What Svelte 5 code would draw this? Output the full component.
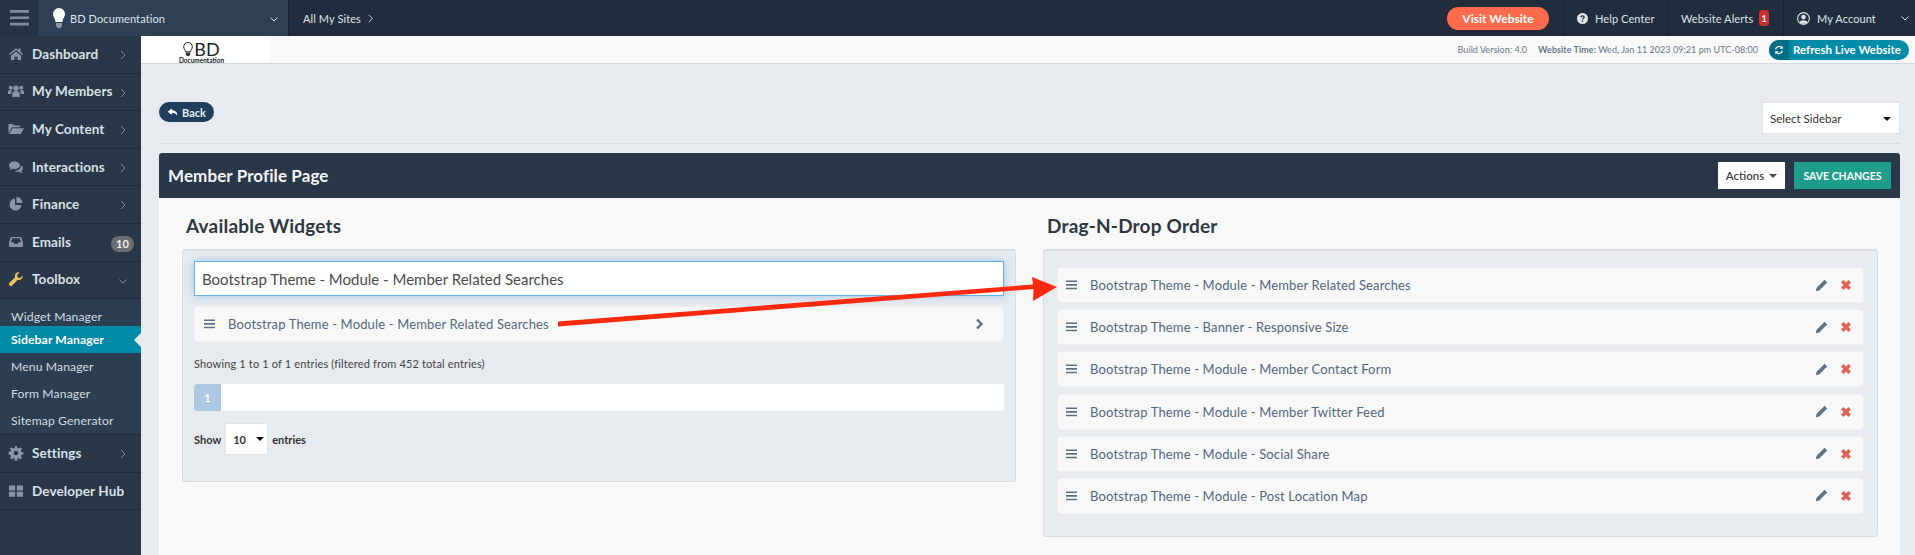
<script>
  const paths = {
    home: 'M8 2.200 1 8l.8 1L8 4l6.200 5 .8-1-2.500-2.100V2.500h-2v1.800Z M3 9.800 8 5.600l5 4.200V14H9.500v-3.500h-3V14H3Z',
    users: 'M8 2.500a2.700 2.700 0 1 1 0 5.400 2.700 2.700 0 0 1 0-5.400Z M4.300 14v-3.300C4.300 9.200 5.300 8.300 6.500 8.300h3c1.200 0 2.200.9 2.200 2.400V14Z M2.800 2.800a2 2 0 1 1 0 4 2 2 0 0 1 0-4Z M13.200 2.800a2 2 0 1 1 0 4 2 2 0 0 1 0-4Z M0 11V8.800c0-1 .7-1.500 1.500-1.500h2.600c-.6.800-.8 2-.8 3.700Z M16 11V8.800c0-1-.7-1.500-1.500-1.500h-2.600c.6.800.8 2 .8 3.700Z',
    folder: 'M.5 12.500V3h4.300l1 1.500h6.400v1.700H4Z M4.500 7.200H16L13 13H1.200Z',
    comments: 'M6.500 2.500c3 0 5.500 1.700 5.500 3.800S9.500 10 6.500 10c-.7 0-1.300 0-1.900-.2-1 .8-2.100 1.200-3.100 1.200.6-.7 1-1.400 1.100-2.100C1.600 8.200 1 7.300 1 6.300c0-2.100 2.500-3.800 5.500-3.800Z M13 6.500c1.300.7 2 1.700 2 2.800 0 1-.6 1.900-1.600 2.600.1.700.5 1.400 1.100 2.100-1 0-2.100-.4-3.100-1.200-1.800.4-4 0-5-1 3.600 0 6.800-1.800 6.600-5.300Z',
    pie: 'M7 2.500A6 6 0 1 0 13.500 9H7Z M8.500 1a6 6 0 0 1 6 6h-6Z',
    inbox: 'M3.500 3h9a1 1 0 0 1 1 .7L15 8.500V12a1 1 0 0 1-1 1H2a1 1 0 0 1-1-1V8.500l1.500-4.800a1 1 0 0 1 1-.7Z M4.300 4.300 2.900 8.300h2.600l1 1.700h3l1-1.700h2.600l-1.400-4Z',
    wrench: 'M14.500 4.500 12 7l-2.500-.7L9 4l2.500-2.500C9.500 1 7.500 2 7 4c-.2.800-.1 1.500.1 2.200l-5.600 5.600a1.800 1.800 0 0 0 2.600 2.600l5.600-5.500c2.500.7 5.500-1.500 4.800-4.400Z',
    cog: 'M6.800 1h2.400l.3 2 1.300.5 1.600-1.200 1.700 1.700-1.200 1.600.5 1.300 2 .3v2.400l-2 .3-.5 1.300 1.200 1.600-1.700 1.700-1.600-1.200-1.300.5-.3 2H6.800l-.3-2-1.300-.5-1.600 1.200-1.700-1.700 1.200-1.600-.5-1.300-2-.3V6.800l2-.3.5-1.300-1.200-1.600L3.600 2.300l1.600 1.200 1.300-.5Z M8 5.700a2.300 2.300 0 1 0 0 4.600 2.300 2.300 0 0 0 0-4.600Z',
    grid: 'M1 2.500h6.200v5H1Z M8.800 2.500H15v5H8.800Z M1 8.800h6.200v5H1Z M8.800 8.800H15v5H8.800Z',
    reply: 'M6.500 3 1 7.500 6.500 12V9.200c3.500 0 5.800.6 7 3.800.5-4.500-2-7.200-7-7.300Z',
    pencil: 'M11.800 1 15 4.200 5.200 14 1 15l1-4.200Z'
  }

  const menu_top = [
    { label: 'Dashboard', icon: 'home' },
    { label: 'My Members', icon: 'users' },
    { label: 'My Content', icon: 'folder' },
    { label: 'Interactions', icon: 'comments' },
    { label: 'Finance', icon: 'pie' },
    { label: 'Emails', icon: 'inbox', badge: '10' }
  ]
  const sub_menu = ['Widget Manager', 'Sidebar Manager', 'Menu Manager', 'Form Manager', 'Sitemap Generator']
  const order_items = [
    'Bootstrap Theme - Module - Member Related Searches',
    'Bootstrap Theme - Banner - Responsive Size',
    'Bootstrap Theme - Module - Member Contact Form',
    'Bootstrap Theme - Module - Member Twitter Feed',
    'Bootstrap Theme - Module - Social Share',
    'Bootstrap Theme - Module - Post Location Map'
  ]
</script>

{#snippet icon(name, cls)}
  <svg class={cls} viewBox="0 0 16 16" aria-hidden="true"><path fill-rule="evenodd" d={paths[name]} /></svg>
{/snippet}

{#snippet bars(cls)}
  <svg class={cls} viewBox="0 0 12 10" aria-hidden="true"><path d="M0 0h12v1.700H0Z M0 4h12v1.700H0Z M0 8h12v1.700H0Z" /></svg>
{/snippet}

{#snippet chev(cls, dir = 'M3 1l4 4-4 4')}
  <svg class={cls} viewBox="0 0 10 10" aria-hidden="true"><path d={dir} fill="none" stroke="currentColor" /></svg>
{/snippet}

<div class="page">
  <header class="topbar">
    <button class="burger" aria-label="Menu">{@render bars('burger-icon')}</button>
    <div class="brand">
      <svg class="bulb" viewBox="0 0 12 20" aria-hidden="true">
        <path d="M6 0a6 6 0 0 1 6 6c0 3-2.200 4-2.500 8h-7C2.200 10 0 9 0 6a6 6 0 0 1 6-6Z" fill="#fff" />
        <path d="M3 15h6v2.500L7.500 20h-3L3 17.500Z" fill="#8d969f" />
      </svg>
      <span class="brand-name">BD Documentation</span>
      {@render chev('brand-chev', 'M1.500 3.500 5 7l3.500-3.500')}
    </div>
    <div class="sites">All My Sites {@render chev('sites-chev')}</div>
    <div class="top-right">
      <button class="visit">Visit Website</button>
      <div class="top-link help">
        <svg class="top-icon" viewBox="0 0 16 16" aria-hidden="true">
          <circle cx="8" cy="8" r="8" fill="#dfe5ea" />
          <path d="M5.600 6.200C5.800 4.800 6.800 4.200 8 4.200c1.400 0 2.400.8 2.400 2 0 1.700-2.400 1.600-2.400 3.300" fill="none" stroke="#212d3d" stroke-width="1.800" />
          <rect x="7" y="10.800" width="2" height="2" fill="#212d3d" />
        </svg>
        Help Center
      </div>
      <div class="top-link alerts">Website Alerts <span class="alert-badge">1</span></div>
      <div class="top-link account">
        <svg class="top-icon account-icon" viewBox="0 0 16 16" aria-hidden="true">
          <circle cx="8" cy="8" r="7.200" fill="none" stroke="#dfe5ea" stroke-width="1.400" />
          <circle cx="8" cy="6.300" r="2.800" fill="#dfe5ea" />
          <path d="M3 13c.6-2.200 2.500-3 5-3s4.400.8 5 3c-2.500 2-7.500 2-10 0Z" fill="#dfe5ea" />
        </svg>
        My Account
        {@render chev('account-chev', 'M1.500 3.500 5 7l3.500-3.500')}
      </div>
    </div>
  </header>

  <div class="layout">
    <nav class="sidebar">
      {#each menu_top as item}
        <div class="nav-item">
          {@render icon(item.icon, 'nav-icon')}
          <span class="nav-label">{item.label}</span>
          {#if item.badge}
            <span class="nav-badge">{item.badge}</span>
          {:else}
            {@render chev('nav-chev')}
          {/if}
        </div>
      {/each}
      <div class="nav-item open">
        {@render icon('wrench', 'nav-icon wrench')}
        <span class="nav-label">Toolbox</span>
        {@render chev('nav-chev', 'M1.500 3.500 5 7l3.500-3.500')}
      </div>
      <div class="sub-menu">
        {#each sub_menu as sub}
          <div class="sub-item" class:active={sub === 'Sidebar Manager'}>{sub}</div>
        {/each}
      </div>
      <div class="nav-item">
        {@render icon('cog', 'nav-icon')}
        <span class="nav-label">Settings</span>
        {@render chev('nav-chev')}
      </div>
      <div class="nav-item">
        {@render icon('grid', 'nav-icon')}
        <span class="nav-label">Developer Hub</span>
      </div>
    </nav>

    <main class="main">
      <div class="strip">
        <div class="logo">
          <div class="logo-top">
            <svg class="logo-bulb" viewBox="0 0 10 14" aria-hidden="true">
              <path d="M5 .5a4.300 4.300 0 0 1 4.300 4.300c0 2.200-1.600 2.900-1.800 5H2.500C2.300 7.700.7 7 .7 4.800A4.300 4.300 0 0 1 5 .5Z" fill="none" stroke="#222" />
              <path d="M2.800 10.500h4.400v2L6 14H4l-1.200-1.500Z" fill="#333" />
            </svg>
            <span class="logo-bd">BD</span>
          </div>
          <span class="logo-doc">Documentation</span>
        </div>
        <div class="strip-right">
          <span class="build">Build Version: 4.0</span>
          <span class="time"><b>Website Time:</b> Wed, Jan 11 2023 09:21 pm UTC-08:00</span>
          <button class="refresh">
            <span class="refresh-icon">
              <svg viewBox="0 0 16 16" aria-hidden="true">
                <path d="M2.500 7A5.600 5.600 0 0 1 12.500 4.500M13.500 9A5.600 5.600 0 0 1 3.500 11.500" fill="none" stroke="#fff" stroke-width="2" />
                <path d="M14 1v5H9Z M2 15v-5h5Z" fill="#fff" />
              </svg>
            </span>
            <span class="refresh-label">Refresh Live Website</span>
          </button>
        </div>
      </div>

      <div class="content">
        <div class="toolbar">
          <button class="back">{@render icon('reply', 'back-icon')} Back</button>
          <div class="select-sidebar">Select Sidebar <i class="caret"></i></div>
        </div>

        <section class="panel">
          <div class="panel-head">
            <h1>Member Profile Page</h1>
            <div class="panel-actions">
              <button class="actions">Actions <i class="caret small"></i></button>
              <button class="save">SAVE CHANGES</button>
            </div>
          </div>
          <div class="panel-body">
            <div class="col col-left">
              <h2>Available Widgets</h2>
              <div class="well">
                <input class="search" value="Bootstrap Theme - Module - Member Related Searches" />
                <div class="row result">
                  {@render bars('row-bars')}
                  <span class="row-text">Bootstrap Theme - Module - Member Related Searches</span>
                  <svg class="row-next" viewBox="0 0 10 12" aria-hidden="true"><path d="M3 1.500 7.500 6 3 10.500" fill="none" stroke="currentColor" stroke-width="2.400" /></svg>
                </div>
                <p class="info">Showing 1 to 1 of 1 entries (filtered from 452 total entries)</p>
                <div class="pager"><span class="page-num">1</span></div>
                <div class="length">
                  <b>Show</b>
                  <span class="length-select">10 <i class="caret"></i></span>
                  <b>entries</b>
                </div>
              </div>
            </div>
            <div class="col col-right">
              <h2>Drag-N-Drop Order</h2>
              <div class="well order">
                {#each order_items as item}
                  <div class="row">
                    {@render bars('row-bars')}
                    <span class="row-text">{item}</span>
                    {@render icon('pencil', 'row-edit')}
                    <svg class="row-del" viewBox="0 0 16 16" aria-hidden="true"><path d="M3 3l10 10M13 3 3 13" fill="none" stroke="currentColor" stroke-width="4.500" /></svg>
                  </div>
                {/each}
              </div>
            </div>
          </div>
        </section>
      </div>
    </main>
  </div>

  <!-- annotation arrow drawn over the screenshot -->
  <svg class="arrow" viewBox="0 0 1915 555" aria-hidden="true">
    <path d="M558 321.500 1033 284.500 1032 277 1057 287 1033 301 1033.500 289 558 326.500Z" fill="#ff2a0d" />
  </svg>
</div>

<style>
  :global(body) {
    margin: 0;
    font-family: 'Lato', 'Open Sans', sans-serif;
  }

  button {
    font-family: inherit;
    border: 0;
    padding: 0;
  }

  .page {
    position: relative;
    width: 1915px;
    height: 555px;
    overflow: hidden;
    background: #e7eaef;
  }

  .arrow {
    position: absolute;
    left: 0;
    top: 0;
    width: 1915px;
    height: 555px;
    pointer-events: none;
  }

  .topbar {
    display: flex;
    height: 36px;
    background: #212d3d;
    color: #dfe5ea;
    font-size: 11px;
  }

  .burger {
    width: 38px;
    background: #253345;
    display: flex;
    align-items: center;
    justify-content: center;
  }

  .burger-icon {
    width: 19px;
    height: 16px;
    fill: #7f8b98;
  }

  .brand {
    width: 251px;
    background: #2d4055;
    display: flex;
    align-items: center;
    border-right: 1px solid #18222e;
    box-sizing: border-box;
    position: relative;
  }

  .bulb {
    width: 12px;
    height: 20px;
    margin-left: 15px;
  }

  .brand-name {
    margin-left: 5px;
    letter-spacing: 0.1px;
  }

  .brand-chev {
    width: 10px;
    height: 10px;
    margin-left: auto;
    margin-right: 9px;
    margin-top: 2px;
  }

  .sites {
    display: flex;
    align-items: center;
    gap: 5px;
    margin-left: 14px;
    letter-spacing: 0.1px;
  }

  .sites-chev {
    width: 9px;
    height: 9px;
  }

  .top-right {
    margin-left: auto;
    display: flex;
    align-items: center;
    height: 100%;
  }

  .visit {
    width: 102px;
    height: 23px;
    border-radius: 12px;
    background: #ff6b4d;
    color: #fff;
    font-size: 12px;
    font-weight: 700;
    margin-right: 14px;
  }

  .top-link {
    height: 100%;
    display: flex;
    align-items: center;
    border-left: 1px solid #18222e;
    box-sizing: border-box;
    letter-spacing: 0.1px;
    white-space: nowrap;
  }

  .help {
    width: 105px;
    padding-left: 13px;
    gap: 7px;
  }

  .alerts {
    width: 115px;
    padding-left: 12px;
    gap: 6px;
  }

  .account {
    width: 132px;
    padding-left: 13px;
    gap: 7px;
  }

  .top-icon {
    width: 11px;
    height: 11px;
  }

  .account-icon {
    width: 13px;
    height: 13px;
  }

  .alert-badge {
    width: 10px;
    height: 16px;
    border-radius: 3px;
    background: #c9302c;
    color: #fff;
    font-size: 9px;
    font-weight: 700;
    display: flex;
    align-items: center;
    justify-content: center;
  }

  .account-chev {
    width: 10px;
    height: 10px;
    margin-left: auto;
    margin-right: 5px;
  }

  .layout {
    display: grid;
    grid-template-columns: 141px 1fr;
    height: 519px;
  }

  .sidebar {
    background: #2a3748;
    color: #d9e0e7;
  }

  .nav-item {
    height: 37.600px;
    box-sizing: border-box;
    display: flex;
    align-items: center;
    border-bottom: 1px solid #212c3a;
    position: relative;
    padding-bottom: 1px;
  }

  .nav-icon {
    width: 16px;
    height: 16px;
    margin-left: 8px;
    fill: #8796a6;
    flex-shrink: 0;
  }

  .wrench {
    fill: #f0c25e;
  }

  .nav-label {
    margin-left: 8px;
    font-size: 13.500px;
    font-weight: 700;
    letter-spacing: 0.1px;
    white-space: nowrap;
  }

  .nav-chev {
    position: absolute;
    right: 13px;
    top: 14px;
    width: 10px;
    height: 10px;
    color: #7d8b9a;
  }

  .nav-badge {
    position: absolute;
    right: 7px;
    top: 12px;
    width: 23px;
    height: 16px;
    border-radius: 8px;
    background: #6b6f73;
    color: #eee;
    font-size: 11px;
    font-weight: 700;
    display: flex;
    align-items: center;
    justify-content: center;
  }

  .sub-menu {
    background: #2c3e51;
    border-bottom: 1px solid #212c3a;
  }

  .sub-item {
    height: 27px;
    box-sizing: border-box;
    display: flex;
    align-items: center;
    padding-left: 11px;
    font-size: 12.200px;
    letter-spacing: 0.1px;
    color: #d5dce3;
    position: relative;
  }

  .sub-item:first-child {
    padding-top: 8px;
  }

  .sub-item.active {
    background: #008ba9;
    color: #fff;
    font-weight: 700;
  }

  .sub-item.active::after {
    content: '';
    position: absolute;
    right: 0;
    top: 7px;
    border: 7px solid transparent;
    border-left-width: 0;
    border-right-color: #e7eaef;
  }

  .main {
    display: flex;
    flex-direction: column;
    min-width: 0;
  }

  .strip {
    height: 28px;
    box-sizing: border-box;
    background: #f9f9f9;
    border-bottom: 1px solid #d5d8dc;
    display: flex;
    align-items: center;
  }

  .logo {
    width: 130px;
    height: 100%;
    background: #fff;
    display: flex;
    flex-direction: column;
    align-items: center;
    color: #222;
    padding-right: 9px;
    box-sizing: border-box;
  }

  .logo-top {
    display: flex;
    align-items: center;
    height: 18px;
    margin-top: 4px;
  }

  .logo-bulb {
    width: 10px;
    height: 14px;
  }

  .logo-bd {
    font-size: 18px;
    line-height: 18px;
    margin-left: 1px;
  }

  .logo-doc {
    font-size: 6.500px;
    line-height: 5px;
    font-weight: 700;
  }

  .strip-right {
    margin-left: auto;
    display: flex;
    align-items: center;
    font-size: 9px;
    color: #68768a;
    letter-spacing: 0.04px;
  }

  .build {
    margin-right: 11px;
  }

  .refresh {
    display: flex;
    align-items: center;
    width: 140px;
    height: 20px;
    margin-left: 11px;
    margin-right: 6px;
    border-radius: 10px;
    background: #008ba9;
    color: #fff;
    font-size: 11.500px;
    font-weight: 700;
    overflow: hidden;
  }

  .refresh-label {
    white-space: nowrap;
  }

  .refresh-icon {
    width: 20px;
    height: 20px;
    background: #006d85;
    display: flex;
    align-items: center;
    justify-content: center;
    margin-right: 4px;
    flex-shrink: 0;
  }

  .refresh-icon svg {
    width: 10px;
    height: 10px;
  }

  .content {
    flex: 1;
    padding: 38px 15px 0 18px;
    min-height: 0;
  }

  .toolbar {
    display: flex;
    justify-content: space-between;
    align-items: flex-start;
    height: 41px;
    border-bottom: 1px solid #d8dbdf;
  }

  .back {
    width: 55px;
    height: 20px;
    border-radius: 10px;
    background: #1f3d5c;
    color: #e6ebf0;
    font-size: 11px;
    font-weight: 700;
    display: flex;
    align-items: center;
    justify-content: center;
    gap: 3px;
  }

  .back-icon {
    width: 12px;
    height: 12px;
    fill: #fff;
  }

  .select-sidebar {
    width: 138px;
    height: 32px;
    box-sizing: border-box;
    background: #fff;
    border: 1px solid #dfe2e6;
    display: flex;
    align-items: center;
    padding-left: 7px;
    font-size: 11.500px;
    color: #333;
    position: relative;
  }

  .caret {
    width: 0;
    height: 0;
    border: 4px solid transparent;
    border-top-color: #111;
    border-bottom-width: 0;
    display: inline-block;
  }

  .select-sidebar .caret {
    position: absolute;
    right: 8px;
    top: 14px;
  }

  .panel {
    margin-top: 9px;
    background: #f8f8f8;
    height: 402px;
    border-radius: 3px 3px 0 0;
  }

  .panel-head {
    height: 45px;
    background: #2a3748;
    border-radius: 3px 3px 0 0;
    display: flex;
    align-items: center;
    justify-content: space-between;
    padding: 0 9px;
  }

  h1 {
    margin: 0;
    font-size: 17px;
    font-weight: 700;
    color: #f4f6f8;
    letter-spacing: 0.1px;
  }

  .panel-actions {
    display: flex;
    gap: 9px;
  }

  .actions {
    width: 67px;
    height: 27px;
    background: #fff;
    color: #333;
    font-size: 11.500px;
    font-weight: 500;
    display: flex;
    align-items: center;
    justify-content: center;
    gap: 5px;
  }

  .actions .caret {
    border-top-color: #444;
    border-width: 4px;
    border-bottom-width: 0;
  }

  .save {
    width: 97px;
    height: 27px;
    background: #1e9c8c;
    color: #fff;
    font-size: 10.500px;
    font-weight: 700;
  }

  .panel-body {
    display: grid;
    grid-template-columns: 834px 835px;
    column-gap: 27px;
    padding-left: 23px;
  }

  h2 {
    margin: 15px 0 0 4px;
    height: 36px;
    line-height: 25px;
    font-size: 19px;
    font-weight: 700;
    color: #2f3740;
    letter-spacing: 0.2px;
  }

  .well {
    box-sizing: border-box;
    background: #e7eaef;
    border: 1px solid #d9dce0;
    border-top-width: 2px;
    border-radius: 3px;
    height: 233px;
    padding: 10px 11px;
  }

  .well.order {
    height: 288px;
    padding: 16px 13px 0;
    display: flex;
    flex-direction: column;
    gap: 6.200px;
  }

  .search {
    display: block;
    width: 100%;
    height: 35px;
    box-sizing: border-box;
    border: 1px solid #66afe9;
    box-shadow: 0 0 8px rgba(102, 175, 233, 0.6);
    padding: 0 7px;
    font-family: inherit;
    font-size: 15px;
    color: #4a4a4a;
    outline: none;
  }

  .row {
    height: 36px;
    box-sizing: border-box;
    flex-shrink: 0;
    background: #f8f8f8;
    border: 1px solid #eceef1;
    border-radius: 4px;
    display: flex;
    align-items: center;
    padding-left: 9px;
    color: #52677f;
    font-size: 13px;
  }

  .order .row {
    padding-left: 8px;
  }

  .result {
    margin-top: 10px;
  }

  .row-bars {
    width: 11px;
    height: 10px;
    fill: #5d6f85;
    flex-shrink: 0;
  }

  .row-text {
    margin-left: 13px;
    letter-spacing: 0.15px;
  }

  .row-next {
    width: 10px;
    height: 12px;
    margin-left: auto;
    margin-right: 19px;
    color: #5d6f85;
  }

  .row-edit {
    width: 13px;
    height: 13px;
    margin-left: auto;
    fill: #5d7288;
  }

  .row-del {
    width: 12px;
    height: 12px;
    margin: 0 11px 0 12px;
    color: #e2604f;
  }

  .info {
    margin: 15px 0 13px;
    font-size: 11px;
    line-height: 14px;
    color: #444;
    letter-spacing: 0.15px;
  }

  .pager {
    height: 27px;
    background: #fff;
    border-radius: 3px;
    overflow: hidden;
  }

  .page-num {
    display: flex;
    width: 27px;
    height: 100%;
    align-items: center;
    justify-content: center;
    background: #adc8e2;
    color: #fff;
    font-size: 11px;
    font-weight: 700;
  }

  .length {
    margin-top: 12px;
    display: flex;
    align-items: center;
    gap: 4px;
    font-size: 11px;
    color: #333;
  }

  .length-select {
    box-sizing: border-box;
    width: 43px;
    height: 32px;
    background: #fff;
    border: 1px solid #e0e3e7;
    display: flex;
    align-items: center;
    gap: 10px;
    padding-left: 7px;
    font-weight: 700;
  }
</style>
